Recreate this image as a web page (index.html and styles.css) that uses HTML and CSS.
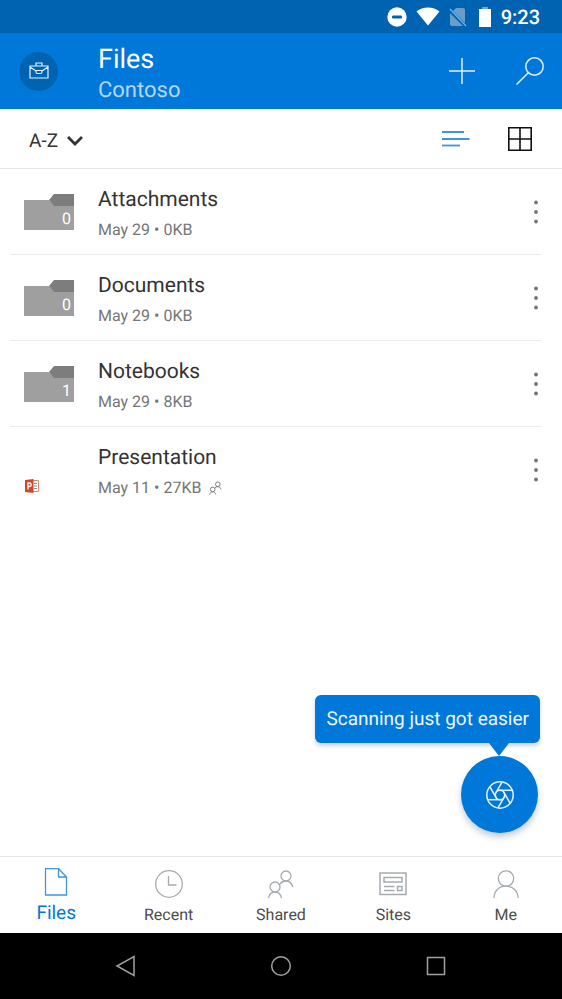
FILE: index.html
```html
<!DOCTYPE html>
<html lang="en">
<head>
<meta charset="utf-8">
<meta name="viewport" content="width=device-width, initial-scale=1">
<title>Files</title>
<link rel="stylesheet" href="styles.css">
</head>
<body>
<svg class="symbols" aria-hidden="true">
  <symbol id="folder" viewBox="0 0 50 36">
    <path d="M0 6H25L31 12H50V36H0Z" fill="#9f9f9f"/>
    <path d="M25 6L30 0H50V12H30Z" fill="#7d7d7d"/>
  </symbol>
  <symbol id="dots" viewBox="0 0 6 24">
    <g fill="#757575"><circle cx="3" cy="2.5" r="1.9"/><circle cx="3" cy="12" r="1.9"/><circle cx="3" cy="21.5" r="1.9"/></g>
  </symbol>
  <symbol id="people" viewBox="0 0 28 28">
    <g fill="none" stroke="currentColor"><circle cx="8" cy="17" r="5"/><circle cx="19" cy="6" r="5"/><path d="M1.5 28C2.500 24 5 22 8 22S13.500 24 14.500 28M13 14C14.500 12 16.500 11 19 11C22 11 24.500 13 26 17"/></g>
  </symbol>
</svg>

<div class="status">
  <svg width="20" height="20" viewBox="0 0 20 20"><circle cx="10" cy="10" r="9.700" fill="#fff"/><rect x="5" y="8.500" width="10" height="3" rx="1.200" fill="#0063b1"/></svg>
  <svg class="wifi" width="24" height="19" viewBox="0 0 24 19"><path d="M.5 4.500C7-1 17-1 23.500 4.500L12 18.500Z" fill="#fff"/></svg>
  <svg class="sim" width="18" height="20" viewBox="0 0 18 20"><path d="M7 1H14Q16 1 16 3V16L4 4ZM1 6L14 19H3Q1 19 1 17Z" fill="#6c9cc8"/><path d="M1 2L17 19" stroke="#67b4f2" stroke-width="1.300"/></svg>
  <svg class="battery" width="12" height="20" viewBox="0 0 12 20"><path d="M0 2H12V20H0Z" fill="#fff"/><path d="M3 0H9V2H3Z" fill="#72a8d5"/></svg>
  <span class="time">9:23</span>
</div>

<header class="header">
  <button class="account" aria-label="Account">
    <svg width="20" height="18" viewBox="0 0 20 18" fill="none" stroke="#e4f1fc" stroke-width="1.200"><path d="M1 4H19V16H1ZM7 4V1H13V4M1 5L7 9M19 5L13 9M7 8.500H13V10Q13 11.500 11.500 11.500H8.500Q7 11.500 7 10Z"/></svg>
  </button>
  <div class="heading">
    <h1>Files</h1>
    <p>Contoso</p>
  </div>
  <button class="plain" aria-label="Add">
    <svg width="28" height="28" viewBox="0 0 28 28"><path d="M14 1V27M1 14H27" stroke="#e4f1fc" stroke-width="1.500"/></svg>
  </button>
  <button class="plain" aria-label="Search">
    <svg width="28" height="28" viewBox="0 0 28 28" fill="none" stroke="#e4f1fc" stroke-width="1.500"><circle cx="18.500" cy="9.500" r="8.700"/><path d="M12.500 15.500L.5 27.500"/></svg>
  </button>
</header>

<div class="toolbar">
  <button class="plain sort">A-Z
    <svg width="18" height="12" viewBox="0 0 18 12"><path d="M2 2L9 9L16 2" fill="none" stroke="#333" stroke-width="2.800"/></svg>
  </button>
  <button class="plain" aria-label="List view">
    <svg width="28" height="18" viewBox="0 0 28 18" fill="none" stroke="#3f94dd" stroke-width="1.800"><path d="M0 2H22M0 9H27.500"/><path d="M0 15.500H18"/></svg>
  </button>
  <button class="plain" aria-label="Grid view">
    <svg width="24" height="24" viewBox="0 0 24 24"><path d="M.8 .8H23.200V23.200H.8ZM12 1V23M1 12H23" fill="none" stroke="#111" stroke-width="1.600"/></svg>
  </button>
</div>

<main class="content">
  <ul class="files">
    <li>
      <div class="thumb"><svg width="50" height="36"><use href="#folder"/></svg><span class="count">0</span></div>
      <div class="info"><h2>Attachments</h2><p>May 29 • 0KB</p></div>
      <button class="plain" aria-label="More options for Attachments"><svg width="6" height="24"><use href="#dots"/></svg></button>
    </li>
    <li>
      <div class="thumb"><svg width="50" height="36"><use href="#folder"/></svg><span class="count">0</span></div>
      <div class="info"><h2>Documents</h2><p>May 29 • 0KB</p></div>
      <button class="plain" aria-label="More options for Documents"><svg width="6" height="24"><use href="#dots"/></svg></button>
    </li>
    <li>
      <div class="thumb"><svg width="50" height="36"><use href="#folder"/></svg><span class="count">1</span></div>
      <div class="info"><h2>Notebooks</h2><p>May 29 • 8KB</p></div>
      <button class="plain" aria-label="More options for Notebooks"><svg width="6" height="24"><use href="#dots"/></svg></button>
    </li>
    <li>
      <div class="thumb document">
        <svg width="16" height="14" viewBox="0 0 16 14"><path d="M8 1.500H14.500V12.500H8" fill="#fff" stroke="#d98a78"/><path d="M10 4.500H13M10 7H13M10 9.500H13" stroke="#8d8d96"/><path d="M1 1L9.500 0V14L1 13Z" fill="#d24726"/><path d="M4 10.500V4H5.500Q7.200 4 7.200 5.700T5.500 7.500H4" fill="none" stroke="#fff" stroke-width="1.300"/></svg>
      </div>
      <div class="info"><h2>Presentation</h2><p>May 11 • 27KB <svg width="13" height="14" stroke-width="2"><use href="#people"/></svg></p></div>
      <button class="plain" aria-label="More options for Presentation"><svg width="6" height="24"><use href="#dots"/></svg></button>
    </li>
  </ul>
  <div class="scan">
    <div class="tip" role="status">Scanning just got easier</div>
    <button class="fab" aria-label="Scan">
      <svg width="28" height="28" viewBox="0 0 28 28" fill="none" stroke="#e8f3fc" stroke-width="1.500"><circle cx="14" cy="14" r="13.200"/><circle cx="14" cy="14" r="4.700"/><path id="blade" d="M12.500 9.300H26"/><use href="#blade" transform="rotate(60 14 14)"/><use href="#blade" transform="rotate(120 14 14)"/><use href="#blade" transform="rotate(180 14 14)"/><use href="#blade" transform="rotate(240 14 14)"/><use href="#blade" transform="rotate(300 14 14)"/></svg>
    </button>
  </div>
</main>

<nav class="tabs" aria-label="Sections">
  <a href="#files" class="active" aria-current="page">
    <svg width="24" height="28" viewBox="0 0 24 28" fill="none" stroke="#3f94dd" stroke-width="1.300"><path d="M1.500 .7H14.500L22.500 9V27H1.500ZM14.500 .7V9H22.500"/></svg>
    Files</a>
  <a href="#recent">
    <svg width="28" height="28" viewBox="0 0 28 28" fill="none" stroke="currentColor" stroke-width="1.300"><circle cx="14" cy="14" r="13.300"/><path d="M13.500 6V15H21.500"/></svg>
    <span>Recent</span></a>
  <a href="#shared">
    <svg width="28" height="28" stroke-width="1.300"><use href="#people"/></svg>
    <span>Shared</span></a>
  <a href="#sites">
    <svg width="28" height="28" viewBox="0 0 28 28" fill="none" stroke="currentColor" stroke-width="1.500"><path d="M1 3H27V24.500H1ZM5 7.500H23V12H5ZM5 16.500H15.500M5 20.500H15.500M18.500 16.500H23V20.500H18.500Z"/></svg>
    <span>Sites</span></a>
  <a href="#me">
    <svg width="28" height="28" viewBox="0 0 28 28" fill="none" stroke="currentColor" stroke-width="1.300"><circle cx="14" cy="8.500" r="7.700"/><path d="M2 28C2 21 7 16.200 14 16.200S26 21 26 28"/></svg>
    <span>Me</span></a>
</nav>

<div class="system">
  <button aria-label="Back"><svg width="22" height="22" viewBox="0 0 22 22"><path d="M19 1.500V20.500L2 11Z"/></svg></button>
  <button aria-label="Home"><svg width="22" height="22" viewBox="0 0 22 22"><circle cx="11" cy="11" r="9.300"/></svg></button>
  <button aria-label="Overview"><svg width="22" height="22" viewBox="0 0 22 22"><path d="M2.500 2.500H19.500V19.500H2.500Z"/></svg></button>
</div>
</body>
</html>
```
FILE: styles.css
```css
* {
  box-sizing: border-box;
}

body {
  margin: 0;
  min-height: 100vh;
  display: flex;
  flex-direction: column;
  background: #fff;
  color: #333;
  font-family: Roboto, "Liberation Sans", sans-serif;
  text-rendering: geometricPrecision;
}

h1, h2, p, ul {
  margin: 0;
  padding: 0;
  font-weight: 400;
}

svg {
  display: block;
  flex: none;
}

button {
  font: inherit;
  color: inherit;
  border: 0;
  padding: 0;
  background: none;
  cursor: pointer;
  text-rendering: inherit;
}

.symbols {
  position: absolute;
  width: 0;
  height: 0;
}

.plain {
  display: flex;
  align-items: center;
}

.status {
  display: flex;
  align-items: center;
  justify-content: flex-end;
  height: 33px;
  padding-right: 22px;
  background: #0063b1;
  color: #fff;
}

.wifi {
  margin-left: 9px;
}

.sim {
  margin-left: 9px;
}

.battery {
  margin-left: 12px;
}

.time {
  margin-left: 10px;
  font-size: 20px;
  font-weight: 500;
  line-height: 32px;
}

.header {
  display: flex;
  align-items: center;
  gap: 40px;
  height: 76px;
  padding: 0 18px 0 19px;
  background: #0078d9;
}

.account {
  display: flex;
  align-items: center;
  justify-content: center;
  width: 39px;
  height: 39px;
  border-radius: 50%;
  background: #0063b1;
}

.heading {
  flex: 1;
  padding-top: 8px;
  line-height: 32px;
}

.heading h1 {
  color: #fff;
  font-size: 27px;
}

.heading p {
  color: #b5d7f4;
  font-size: 22px;
}

.toolbar {
  display: flex;
  align-items: center;
  gap: 38px;
  height: 60px;
  padding: 0 30px 0 29px;
  border-bottom: 1px solid #e8e8e8;
}

.sort {
  gap: 8px;
  margin-right: auto;
  padding-top: 4px;
  font-size: 19px;
}

.content {
  flex: 1;
  position: relative;
}

.files {
  list-style: none;
  padding: 0 21px 0 10px;
}

.files li {
  display: flex;
  align-items: center;
  height: 86px;
  padding-left: 14px;
  border-bottom: 1px solid #ececec;
}

.files li:last-child {
  border-bottom-color: transparent;
}

.thumb {
  position: relative;
  width: 50px;
}

.count {
  position: absolute;
  right: 3px;
  bottom: 0;
  color: #fff;
  font-size: 16px;
  line-height: 22px;
}

.document {
  align-self: flex-end;
  padding-bottom: 19px;
}

.info {
  flex: 1;
  padding: 6px 0 0 24px;
  line-height: 30px;
}

.info h2 {
  font-size: 21px;
}

.info p {
  display: flex;
  align-items: center;
  gap: 8px;
  color: #757575;
  font-size: 16px;
}

.files .plain {
  width: 8px;
}

.scan {
  position: absolute;
  right: 22px;
  bottom: 23px;
  display: flex;
  flex-direction: column;
  align-items: flex-end;
  gap: 13px;
}

.tip {
  position: relative;
  padding: 0 11px;
  border-radius: 6px;
  background: #0078d9;
  box-shadow: 0 3px 4px rgba(0, 50, 100, .2);
  color: #eef6fd;
  font-size: 19px;
  line-height: 48px;
}

.tip::after {
  content: "";
  position: absolute;
  top: 100%;
  right: 31px;
  border: 10px solid transparent;
  border-top: 13px solid #0078d9;
  border-bottom: 0;
}

.fab {
  display: flex;
  align-items: center;
  justify-content: center;
  width: 77px;
  height: 77px;
  margin-right: 2px;
  border-radius: 50%;
  background: #0078d9;
  box-shadow: 0 4px 6px rgba(0, 50, 100, .25);
}

.tabs {
  display: grid;
  grid-template-columns: repeat(5, 1fr);
  height: 77px;
  border-top: 1px solid #e8e8e8;
}

.tabs a {
  display: flex;
  flex-direction: column;
  align-items: center;
  gap: 5px;
  padding-top: 13px;
  color: #a6abb1;
  font-size: 16px;
  line-height: 24px;
  text-decoration: none;
}

.tabs span {
  color: #4c4c4c;
}

.tabs .active {
  padding-top: 11px;
  color: #0078d9;
  font-size: 19px;
}

.system {
  display: flex;
  height: 66px;
  padding: 0 48px;
  background: #000;
}

.system button {
  flex: 1;
  display: flex;
  align-items: center;
  justify-content: center;
}

.system svg {
  fill: none;
  stroke: #a0a0a0;
  stroke-width: 1.5px;
}
```
